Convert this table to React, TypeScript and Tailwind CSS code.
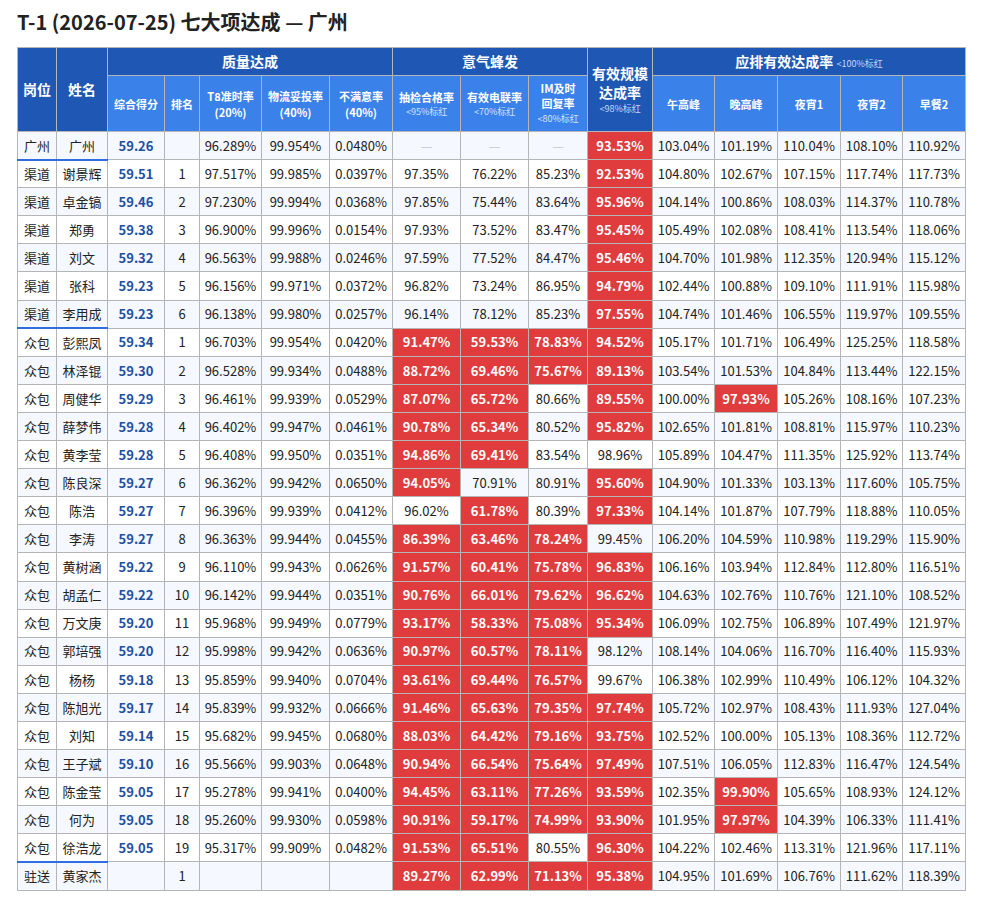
import * as React from 'react';

type Row = {
  pos: string;
  name: string;
  score: string;
  rank: string;
  t8: string;
  wl: string;
  bmy: string;
  cj: number | null;
  dl: number | null;
  im: number | null;
  gm: number;
  peaks: number[];
};

const raw: string[] = [
  '广州|广州|59.26||96.289%|99.954%|0.0480%|-|-|-|93.53|103.04 101.19 110.04 108.10 110.92',
  '渠道|谢景辉|59.51|1|97.517%|99.985%|0.0397%|97.35|76.22|85.23|92.53|104.80 102.67 107.15 117.74 117.73',
  '渠道|卓金镐|59.46|2|97.230%|99.994%|0.0368%|97.85|75.44|83.64|95.96|104.14 100.86 108.03 114.37 110.78',
  '渠道|郑勇|59.38|3|96.900%|99.996%|0.0154%|97.93|73.52|83.47|95.45|105.49 102.08 108.41 113.54 118.06',
  '渠道|刘文|59.32|4|96.563%|99.988%|0.0246%|97.59|77.52|84.47|95.46|104.70 101.98 112.35 120.94 115.12',
  '渠道|张科|59.23|5|96.156%|99.971%|0.0372%|96.82|73.24|86.95|94.79|102.44 100.88 109.10 111.91 115.98',
  '渠道|李用成|59.23|6|96.138%|99.980%|0.0257%|96.14|78.12|85.23|97.55|104.74 101.46 106.55 119.97 109.55',
  '众包|彭熙凤|59.34|1|96.703%|99.954%|0.0420%|91.47|59.53|78.83|94.52|105.17 101.71 106.49 125.25 118.58',
  '众包|林泽锟|59.30|2|96.528%|99.934%|0.0488%|88.72|69.46|75.67|89.13|103.54 101.53 104.84 113.44 122.15',
  '众包|周健华|59.29|3|96.461%|99.939%|0.0529%|87.07|65.72|80.66|89.55|100.00 97.93 105.26 108.16 107.23',
  '众包|薛梦伟|59.28|4|96.402%|99.947%|0.0461%|90.78|65.34|80.52|95.82|102.65 101.81 108.81 115.97 110.23',
  '众包|黄李莹|59.28|5|96.408%|99.950%|0.0351%|94.86|69.41|83.54|98.96|105.89 104.47 111.35 125.92 113.74',
  '众包|陈良深|59.27|6|96.362%|99.942%|0.0650%|94.05|70.91|80.91|95.60|104.90 101.33 103.13 117.60 105.75',
  '众包|陈浩|59.27|7|96.396%|99.939%|0.0412%|96.02|61.78|80.39|97.33|104.14 101.87 107.79 118.88 110.05',
  '众包|李涛|59.27|8|96.363%|99.944%|0.0455%|86.39|63.46|78.24|99.45|106.20 104.59 110.98 119.29 115.90',
  '众包|黄树涵|59.22|9|96.110%|99.943%|0.0626%|91.57|60.41|75.78|96.83|106.16 103.94 112.84 112.80 116.51',
  '众包|胡孟仁|59.22|10|96.142%|99.944%|0.0351%|90.76|66.01|79.62|96.62|104.63 102.76 110.76 121.10 108.52',
  '众包|万文庚|59.20|11|95.968%|99.949%|0.0779%|93.17|58.33|75.08|95.34|106.09 102.75 106.89 107.49 121.97',
  '众包|郭培强|59.20|12|95.998%|99.942%|0.0636%|90.97|60.57|78.11|98.12|108.14 104.06 116.70 116.40 115.93',
  '众包|杨杨|59.18|13|95.859%|99.940%|0.0704%|93.61|69.44|76.57|99.67|106.38 102.99 110.49 106.12 104.32',
  '众包|陈旭光|59.17|14|95.839%|99.932%|0.0666%|91.46|65.63|79.35|97.74|105.72 102.97 108.43 111.93 127.04',
  '众包|刘知|59.14|15|95.682%|99.945%|0.0680%|88.03|64.42|79.16|93.75|102.52 100.00 105.13 108.36 112.72',
  '众包|王子斌|59.10|16|95.566%|99.903%|0.0648%|90.94|66.54|75.64|97.49|107.51 106.05 112.83 116.47 124.54',
  '众包|陈金莹|59.05|17|95.278%|99.941%|0.0400%|94.45|63.11|77.26|93.59|102.35 99.90 105.65 108.93 124.12',
  '众包|何为|59.05|18|95.260%|99.930%|0.0598%|90.91|59.17|74.99|93.90|101.95 97.97 104.39 106.33 111.41',
  '众包|徐浩龙|59.05|19|95.317%|99.909%|0.0482%|91.53|65.51|80.55|96.30|104.22 102.46 113.31 121.96 117.11',
  '驻送|黄家杰||1||||89.27|62.99|71.13|95.38|104.95 101.69 106.76 111.62 118.39',
];

const num = (s: string) => (s === '-' ? null : parseFloat(s));

const rows: Row[] = raw.map((line) => {
  const p = line.split('|');
  return {
    pos: p[0],
    name: p[1],
    score: p[2],
    rank: p[3],
    t8: p[4],
    wl: p[5],
    bmy: p[6],
    cj: num(p[7]),
    dl: num(p[8]),
    im: num(p[9]),
    gm: parseFloat(p[10]),
    peaks: p[11].split(' ').map(parseFloat),
  };
});

// last row of each group gets the blue divider under 岗位 / 姓名
const groupEnds = new Set([0, 6, 25]);

const widths = [39, 51, 57, 35, 62, 68, 63, 68, 68, 59, 65, 62, 63, 63, 62, 63];

const dark = 'bg-[#1f57b4] text-white font-bold border border-[#b5b5b5]';
const light = 'bg-[#3b81ea] text-white font-bold border border-[#b5b5b5]';

function Rate({ v, limit }: { v: number | null; limit: number }) {
  if (v === null) {
    return <td className="border border-[#b5b5b5] text-center text-[#c8c8c8]">—</td>;
  }
  const red = v < limit;
  return (
    <td
      className={
        red
          ? 'border border-[#b5b5b5] bg-[#e03b3d] text-center font-bold text-white'
          : 'border border-[#b5b5b5] text-center'
      }
    >
      {v.toFixed(2)}%
    </td>
  );
}

export default function App() {
  return (
    <div
      className="min-h-screen bg-white px-[17px] pt-[8px] text-[#222]"
      style={{ fontFamily: '"Noto Sans CJK SC", "Noto Sans", sans-serif' }}
    >
      <h1 className="text-[20px] font-bold leading-[28px] text-[#222]">T-1 (2026-07-25) 七大项达成 — 广州</h1>
      <table className="mt-[11px] w-[949px] table-fixed border-collapse text-[13px]">
        <colgroup>
          {widths.map((w, i) => (
            <col key={i} style={{ width: w }} />
          ))}
        </colgroup>
        <thead>
          <tr className="h-[28px]">
            <th rowSpan={2} className={`${dark} text-[14px]`}>岗位</th>
            <th rowSpan={2} className={`${dark} text-[14px]`}>姓名</th>
            <th colSpan={5} className={`${dark} text-[14px]`}>质量达成</th>
            <th colSpan={3} className={`${dark} text-[14px]`}>意气蜂发</th>
            <th rowSpan={2} className={`${dark} text-[14px] leading-[19px]`}>
              有效规模
              <br />
              达成率
              <div className="text-[9px] font-normal leading-[14px] text-[#c9d8f5]">&lt;98%标红</div>
            </th>
            <th colSpan={5} className={`${dark} text-[14px]`}>
              应排有效达成率 <span className="text-[9px] font-normal text-[#c9d8f5]">&lt;100%标红</span>
            </th>
          </tr>
          <tr className="h-[56px] text-[11px] leading-[16px]">
            <th className={light}>综合得分</th>
            <th className={light}>排名</th>
            <th className={light}>
              T8准时率
              <br />
              (20%)
            </th>
            <th className={light}>
              物流妥投率
              <br />
              (40%)
            </th>
            <th className={light}>
              不满意率
              <br />
              (40%)
            </th>
            <th className={light}>
              抽检合格率
              <div className="text-[9px] font-normal leading-[14px] text-[#d5e3fb]">&lt;95%标红</div>
            </th>
            <th className={light}>
              有效电联率
              <div className="text-[9px] font-normal leading-[14px] text-[#d5e3fb]">&lt;70%标红</div>
            </th>
            <th className={`${light} leading-[15px]`}>
              IM及时
              <br />
              回复率
              <div className="text-[9px] font-normal leading-[16px] text-[#d5e3fb]">&lt;80%标红</div>
            </th>
            <th className={light}>午高峰</th>
            <th className={light}>晚高峰</th>
            <th className={light}>夜宵1</th>
            <th className={light}>夜宵2</th>
            <th className={light}>早餐2</th>
          </tr>
        </thead>
        <tbody>
          {rows.map((r, i) => {
            const end = groupEnds.has(i);
            const lead = end
              ? 'border border-[#b5b5b5] border-b-2 border-b-[#2f6de0] text-center'
              : 'border border-[#b5b5b5] text-center';
            return (
              <tr key={i} className={`h-[28.1px] ${i % 2 === 0 ? 'bg-[#f5f8fe]' : 'bg-white'}`}>
                <td className={lead}>{r.pos}</td>
                <td className={lead}>{r.name}</td>
                <td className="border border-[#b5b5b5] text-center font-bold text-[#1f4f9f]">{r.score}</td>
                <td className="border border-[#b5b5b5] text-center">{r.rank}</td>
                <td className="border border-[#b5b5b5] text-center">{r.t8}</td>
                <td className="border border-[#b5b5b5] text-center">{r.wl}</td>
                <td className="border border-[#b5b5b5] text-center">{r.bmy}</td>
                <Rate v={r.cj} limit={95} />
                <Rate v={r.dl} limit={70} />
                <Rate v={r.im} limit={80} />
                <Rate v={r.gm} limit={98} />
                {r.peaks.map((p, j) => (
                  <Rate key={j} v={p} limit={100} />
                ))}
              </tr>
            );
          })}
        </tbody>
      </table>
    </div>
  );
}
